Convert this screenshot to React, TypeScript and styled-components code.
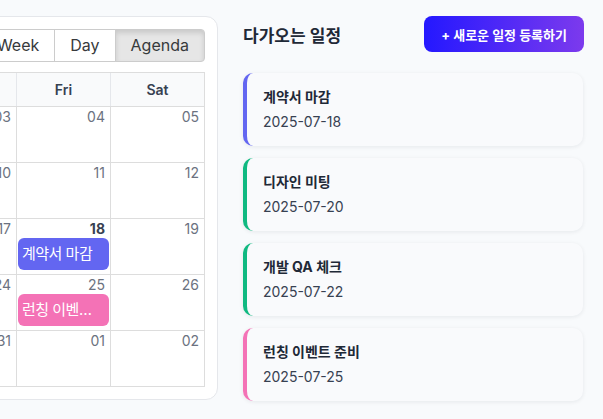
import React from 'react';
import styled, { createGlobalStyle } from 'styled-components';

const GlobalStyle = createGlobalStyle`
	html,
	body {
		margin: 0;
		padding: 0;
		background: #f8fafc;
		font-family: Inter, 'Noto Sans CJK KR', 'Noto Sans', sans-serif;
		color: #1f2937;
		overflow: hidden;
	}
	* {
		box-sizing: border-box;
	}
`;

const Page = styled.div`
	width: 100vw;
	height: 419px;
	display: flex;
	justify-content: flex-end;
	align-items: flex-start;
	gap: 25px;
	padding: 16px 19px 0 0;
	overflow: hidden;
`;

/* calendar */

const CalendarCard = styled.section`
	flex-shrink: 0;
	width: 686px;
	background: #ffffff;
	border: 1px solid #e5e7eb;
	border-radius: 12px;
	padding: 12px;
`;

const Toolbar = styled.div`
	display: flex;
	align-items: center;
	justify-content: space-between;
	margin-bottom: 10px;
`;

const ButtonGroup = styled.div`
	display: flex;
`;

const ToolButton = styled.button<{ $active?: boolean }>`
	font: inherit;
	font-size: 16px;
	line-height: 19px;
	color: #373a3c;
	padding: 6px 15px;
	border: 1px solid #ccc;
	margin-left: -1px;
	background: ${(p) => (p.$active ? '#e6e6e6' : '#ffffff')};
	box-shadow: ${(p) => (p.$active ? 'inset 0 3px 5px rgba(0, 0, 0, 0.125)' : 'none')};
	cursor: pointer;

	&:first-child {
		margin-left: 0;
		border-radius: 4px 0 0 4px;
	}
	&:last-child {
		border-radius: 0 4px 4px 0;
	}
`;

const ToolLabel = styled.span`
	font-size: 16px;
	color: #373a3c;
`;

const MonthGrid = styled.div`
	border: 1px solid #ddd;
`;

const HeaderRow = styled.div`
	display: grid;
	grid-template-columns: repeat(7, 1fr);
	height: 33px;
	background: #f9fafb;
`;

const HeaderCell = styled.div`
	display: flex;
	align-items: center;
	justify-content: center;
	font-size: 14px;
	font-weight: 600;
	color: #374151;
	border-left: 1px solid #e5e7eb;

	&:first-child {
		border-left: none;
	}
`;

const WeekRow = styled.div`
	display: grid;
	grid-template-columns: repeat(7, 1fr);
	height: 56px;
	border-top: 1px solid #ddd;
`;

const DayCell = styled.div`
	min-width: 0;
	display: flex;
	flex-direction: column;
	border-left: 1px solid #ddd;
	padding: 0 1px;

	&:first-child {
		border-left: none;
	}
`;

const DateNum = styled.div<{ $today?: boolean }>`
	text-align: right;
	padding: 1px 4px 0 0;
	font-size: 14px;
	line-height: 18px;
	font-weight: ${(p) => (p.$today ? 700 : 400)};
	color: ${(p) => (p.$today ? '#374151' : '#6b7280')};
`;

const CalEvent = styled.div<{ $color: string }>`
	height: 32px;
	line-height: 32px;
	padding: 0 4px;
	border-radius: 6px;
	background: ${(p) => p.$color};
	color: #ffffff;
	font-size: 15px;
	letter-spacing: -0.5px;
	white-space: nowrap;
	overflow: hidden;
	text-overflow: ellipsis;
`;

/* upcoming list */

const Side = styled.aside`
	flex-shrink: 0;
	width: 341px;
	display: flex;
	flex-direction: column;
	gap: 21px;
`;

const SideHeader = styled.div`
	display: flex;
	align-items: center;
	justify-content: space-between;
`;

const SideTitle = styled.h2`
	margin: 0;
	font-size: 17px;
	font-weight: 600;
	color: #1f2937;
`;

const AddButton = styled.button`
	height: 36px;
	padding: 0 17px;
	border: none;
	border-radius: 8px;
	background: linear-gradient(90deg, #2418ff 0%, #7c3aed 100%);
	color: #ffffff;
	font: inherit;
	font-size: 13px;
	font-weight: 700;
	cursor: pointer;
`;

const List = styled.div`
	display: flex;
	flex-direction: column;
	gap: 12px;
	width: 340px;
`;

const ItemCard = styled.div<{ $color: string }>`
	background: #f9fafc;
	border-left: 4px solid ${(p) => p.$color};
	border-radius: 10px;
	padding: 14px 16px;
	box-shadow: 0 1px 4px rgba(15, 23, 42, 0.08);
`;

const ItemTitle = styled.div`
	font-size: 14px;
	font-weight: 700;
	line-height: 20px;
	color: #1f2937;
	margin-bottom: 5px;
`;

const ItemDate = styled.div`
	font-size: 14px;
	line-height: 20px;
	color: #374151;
`;

type Schedule = {
	title: string;
	date: string;
	color: string;
};

const schedules: Schedule[] = [
	{ title: '계약서 마감', date: '2025-07-18', color: '#6366f1' },
	{ title: '디자인 미팅', date: '2025-07-20', color: '#10b981' },
	{ title: '개발 QA 체크', date: '2025-07-22', color: '#10b981' },
	{ title: '런칭 이벤트 준비', date: '2025-07-25', color: '#f472b6' },
];

const weekDays = ['Sun', 'Mon', 'Tue', 'Wed', 'Thu', 'Fri', 'Sat'];

type Day = { key: string; label: string };

function buildWeeks(): Day[][] {
	// July 2025 starts on a Tuesday, grid starts Sunday June 29
	const start = new Date(2025, 5, 29);
	const weeks: Day[][] = [];
	for (let w = 0; w < 5; w++) {
		const week: Day[] = [];
		for (let d = 0; d < 7; d++) {
			const dt = new Date(start);
			dt.setDate(start.getDate() + w * 7 + d);
			const mm = String(dt.getMonth() + 1).padStart(2, '0');
			const dd = String(dt.getDate()).padStart(2, '0');
			week.push({ key: `${dt.getFullYear()}-${mm}-${dd}`, label: dd });
		}
		weeks.push(week);
	}
	return weeks;
}

const weeks = buildWeeks();
const today = '2025-07-18';

export default function App(): JSX.Element {
	return (
		<>
			<GlobalStyle />
			<Page>
				<CalendarCard>
					<Toolbar>
						<ButtonGroup>
							<ToolButton>Today</ToolButton>
							<ToolButton>Back</ToolButton>
							<ToolButton>Next</ToolButton>
						</ButtonGroup>
						<ToolLabel>July 2025</ToolLabel>
						<ButtonGroup>
							<ToolButton>Month</ToolButton>
							<ToolButton>Week</ToolButton>
							<ToolButton>Day</ToolButton>
							<ToolButton $active>Agenda</ToolButton>
						</ButtonGroup>
					</Toolbar>
					<MonthGrid>
						<HeaderRow>
							{weekDays.map((d) => (
								<HeaderCell key={d}>{d}</HeaderCell>
							))}
						</HeaderRow>
						{weeks.map((week, i) => (
							<WeekRow key={i}>
								{week.map((day) => {
									const ev = schedules.find((s) => s.date === day.key);
									return (
										<DayCell key={day.key}>
											<DateNum $today={day.key === today}>{day.label}</DateNum>
											{ev && <CalEvent $color={ev.color}>{ev.title}</CalEvent>}
										</DayCell>
									);
								})}
							</WeekRow>
						))}
					</MonthGrid>
				</CalendarCard>
				<Side>
					<SideHeader>
						<SideTitle>다가오는 일정</SideTitle>
						<AddButton>+ 새로운 일정 등록하기</AddButton>
					</SideHeader>
					<List>
						{schedules.map((s) => (
							<ItemCard key={s.date} $color={s.color}>
								<ItemTitle>{s.title}</ItemTitle>
								<ItemDate>{s.date}</ItemDate>
							</ItemCard>
						))}
					</List>
				</Side>
			</Page>
		</>
	);
}
